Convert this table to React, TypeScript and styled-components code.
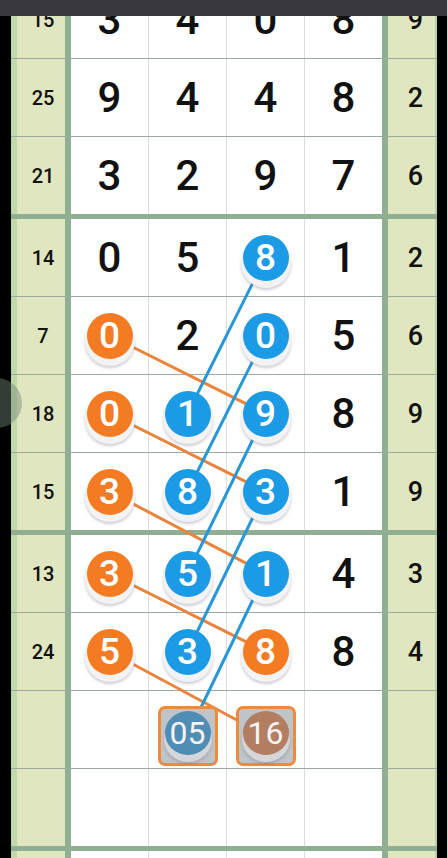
import styled, { createGlobalStyle } from 'styled-components';

const ROW_H = 77;
const LINE = 1;
const THICK = 5;
const LEFT_W = 54;
const GAP_W = 6;
const COL_W = 77;

const GlobalStyle = createGlobalStyle`
  html, body {
    margin: 0;
    padding: 0;
    background: #000;
  }
  body {
    font-family: Roboto, "Liberation Sans", sans-serif;
  }
`

type Cell =
  | { t: 'plain'; v: string }
  | { t: 'orange'; v: string }
  | { t: 'blue'; v: string }
  | { t: 'pred'; v: string; c: string }
  | { t: 'empty' }

type RowData = { n: string; cells: Cell[]; r: string }

const p = (v: string): Cell => ({ t: 'plain', v })
const o = (v: string): Cell => ({ t: 'orange', v })
const b = (v: string): Cell => ({ t: 'blue', v })
const e: Cell = { t: 'empty' }

const row = (n: string, cells: (Cell | string)[], r: string): RowData => ({
    n,
    cells: cells.map((c) => (typeof c === 'string' ? p(c) : c)),
    r,
})

const groups: RowData[][] = [
    [
        row('15', ['3', '4', '0', '8'], '9'),
        row('25', ['9', '4', '4', '8'], '2'),
        row('21', ['3', '2', '9', '7'], '6'),
    ],
    [
        row('14', ['0', '5', b('8'), '1'], '2'),
        row('7', [o('0'), '2', b('0'), '5'], '6'),
        row('18', [o('0'), b('1'), b('9'), '8'], '9'),
        row('15', [o('3'), b('8'), b('3'), '1'], '9'),
    ],
    [
        row('13', [o('3'), b('5'), b('1'), '4'], '3'),
        row('24', [o('5'), b('3'), o('8'), '8'], '4'),
        row('', [e, { t: 'pred', v: '05', c: '#4f8db5' }, { t: 'pred', v: '16', c: '#b27d60' }, e], ''),
        row('', [e, e, e, e], ''),
    ],
    [row('', [e, e, e, e], '')],
]

// top of every row, in board coordinates
const rowTops: number[] = []
{
    let y = 0
    groups.forEach((g) => {
        g.forEach((_, i) => {
            rowTops.push(y + i * (ROW_H + LINE))
        })
        y += g.length * ROW_H + (g.length - 1) * LINE + THICK
    })
}

const center = (ri: number, col: number, dy = 0) => ({
    x: LEFT_W + GAP_W + col * (COL_W + LINE) + COL_W / 2,
    y: rowTops[ri] + ROW_H / 2 + dy,
})

const PRED_DY = 6

const blueLinks: [number, number, number, number, number?][] = [
    [3, 2, 5, 1],
    [4, 2, 6, 1],
    [5, 2, 7, 1],
    [6, 2, 8, 1],
    [7, 2, 9, 1, PRED_DY],
]

const orangeLinks: [number, number, number, number, number?][] = [
    [4, 0, 5, 2],
    [5, 0, 6, 2],
    [6, 0, 7, 2],
    [7, 0, 8, 2],
    [8, 0, 9, 2, PRED_DY],
]

const Screen = styled.div`
    width: 447px;
    height: 858px;
    display: flex;
    flex-direction: column;
    overflow: hidden;
    background: #000;
`

const TopBar = styled.div`
    height: 16px;
    flex: none;
    background: #39383f;
`

const Viewport = styled.div`
    flex: 1;
    position: relative;
    overflow: hidden;
    padding: 0 10px 0 11px;
`

const Board = styled.div`
    position: relative;
    z-index: 0;
    margin-top: -35px;
    display: flex;
    flex-direction: column;
    gap: ${THICK}px;
    background: #90ae92;
`

const Group = styled.div`
    display: flex;
    flex-direction: column;
    gap: ${LINE}px;
    background: #9daa9f;
`

const Row = styled.div`
    display: grid;
    grid-template-columns: ${LEFT_W}px ${COL_W * 4 + LINE * 3}px 49px;
    column-gap: ${GAP_W}px;
    height: ${ROW_H}px;
    background: #90ae92;
`

const SideCell = styled.div<{ $side: 'left' | 'right' }>`
    display: flex;
    align-items: center;
    justify-content: center;
    background: #e0e6bf;
    color: #111;
    font-family: Roboto, "Liberation Sans", sans-serif;
    ${({ $side }) =>
        $side === 'left'
            ? `border-left: 6px solid #bfd9a9;
               padding-left: 4px;
               font-size: 20px;
               font-weight: 500;`
            : `border-right: 2px solid #b8d3a6;
               padding-left: 8px;
               font-size: 27px;
               font-weight: 500;`}
`

const WhiteArea = styled.div`
    display: grid;
    grid-template-columns: repeat(4, ${COL_W}px);
    column-gap: ${LINE}px;
    background: #d9dddb;
`

const NumCell = styled.div`
    display: flex;
    align-items: center;
    justify-content: center;
    background: #fff;
    color: #111;
    font-size: 42px;
    font-weight: 500;
    line-height: 1;
`

const Ball = styled.div<{ $c: string }>`
    position: relative;
    z-index: 2;
    width: 46px;
    height: 46px;
    border-radius: 50%;
    background: ${({ $c }) => $c};
    color: #fff;
    font-size: 37px;
    font-weight: 500;
    display: flex;
    align-items: center;
    justify-content: center;
    box-shadow:
        0 5px 0 2px #f3f3f6,
        0 7px 3px 2px rgba(110, 110, 135, 0.35);
`

const PredBox = styled.div`
    position: relative;
    z-index: 2;
    margin-top: ${PRED_DY * 2}px;
    box-sizing: border-box;
    width: 60px;
    height: 60px;
    border: 3px solid #ef8a3a;
    border-radius: 7px;
    background: #bfc4c9;
    display: flex;
    align-items: flex-start;
    justify-content: center;
    padding-top: 2px;
`

const PredBall = styled.div<{ $c: string }>`
    width: 46px;
    height: 44px;
    border-radius: 50%;
    background: ${({ $c }) => $c};
    color: #f4f4f4;
    font-size: 32px;
    font-weight: 400;
    display: flex;
    align-items: center;
    justify-content: center;
    box-shadow:
        0 6px 0 1px #d4d6da,
        0 8px 3px 1px rgba(100, 100, 120, 0.3);
`

const Links = styled.svg`
    position: absolute;
    left: 0;
    top: 0;
    z-index: 1;
    pointer-events: none;
`

const Handle = styled.div`
    position: absolute;
    left: -28px;
    top: 362px;
    width: 50px;
    height: 50px;
    border-radius: 50%;
    background: rgba(115, 135, 118, 0.45);
    z-index: 3;
`

function CellView({ cell }: { cell: Cell }) {
    switch (cell.t) {
        case 'plain':
            return <NumCell>{cell.v}</NumCell>
        case 'orange':
            return <NumCell><Ball $c='#f47b22'>{cell.v}</Ball></NumCell>
        case 'blue':
            return <NumCell><Ball $c='#1b9ae6'>{cell.v}</Ball></NumCell>
        case 'pred':
            return <NumCell>
                <PredBox>
                    <PredBall $c={cell.c}>{cell.v}</PredBall>
                </PredBox>
            </NumCell>
        default:
            return <NumCell />
    }
}

function TrendLines() {
    const w = LEFT_W + GAP_W * 2 + COL_W * 4 + LINE * 3 + 49
    const h = rowTops[rowTops.length - 1] + ROW_H
    const draw = (links: typeof blueLinks, color: string) =>
        links.map(([r1, c1, r2, c2, dy], i) => {
            const a = center(r1, c1)
            const z = center(r2, c2, dy ?? 0)
            return <line key={color + i} x1={a.x} y1={a.y} x2={z.x} y2={z.y} stroke={color} strokeWidth={3} />
        })
    return <Links width={w} height={h}>
        {draw(orangeLinks, '#e9843a')}
        {draw(blueLinks, '#2597da')}
    </Links>
}

export default function App() {
    return <>
        <GlobalStyle />
        <Screen>
            <TopBar />
            <Viewport>
                <Board>
                    {groups.map((g, gi) => (
                        <Group key={gi}>
                            {g.map((r, ri) => (
                                <Row key={ri}>
                                    <SideCell $side='left'>{r.n}</SideCell>
                                    <WhiteArea>
                                        {r.cells.map((c, ci) => <CellView key={ci} cell={c} />)}
                                    </WhiteArea>
                                    <SideCell $side='right'>{r.r}</SideCell>
                                </Row>
                            ))}
                        </Group>
                    ))}
                    <TrendLines />
                </Board>
                <Handle />
            </Viewport>
        </Screen>
    </>
}
